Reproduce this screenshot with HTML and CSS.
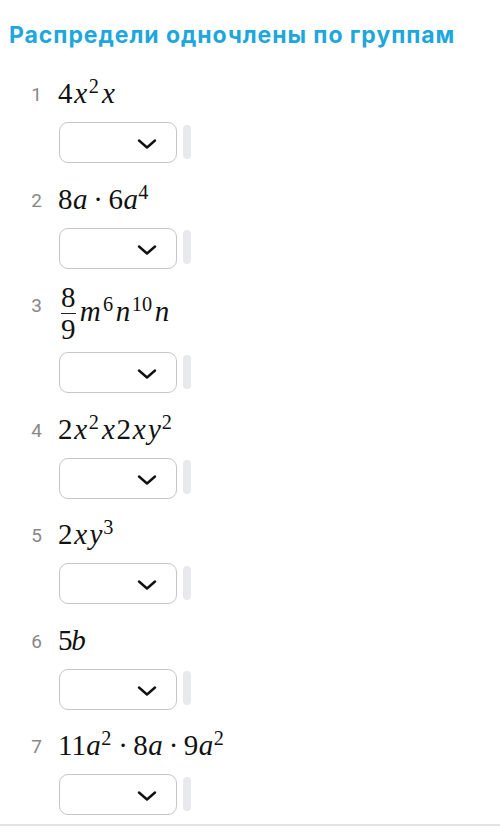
FILE: index.html
```html
<!DOCTYPE html>
<html lang="ru">
<head>
<meta charset="utf-8">
<title>Распредели одночлены по группам</title>
<link rel="stylesheet" href="styles.css">
</head>
<body>
<h1 class="title">Распредели одночлены по группам</h1>
<ol class="list">
  <li class="item">
    <div class="row"><span class="num">1</span><span class="math"><span class="d">4</span><i class="vx">x</i><sup>2</sup><i class="vx">x</i></span></div>
    <div class="pick"><div class="select"><svg class="chev" viewBox="0 0 20 10"><polyline points="2,1.5 10,8.5 18,1.5"/></svg></div><span class="bar"></span></div>
  </li>
  <li class="item">
    <div class="row"><span class="num">2</span><span class="math"><span class="d">8</span><i class="va">a</i><span class="op">·</span><span class="d">6</span><i class="va">a</i><sup>4</sup></span></div>
    <div class="pick"><div class="select"><svg class="chev" viewBox="0 0 20 10"><polyline points="2,1.5 10,8.5 18,1.5"/></svg></div><span class="bar"></span></div>
  </li>
  <li class="item">
    <div class="row"><span class="num">3</span><span class="math"><span class="frac"><span class="fn">8</span><span class="fl"></span><span class="fd">9</span></span><i class="vm">m</i><sup>6</sup><i class="vn">n</i><sup>10</sup><i class="vn">n</i></span></div>
    <div class="pick"><div class="select"><svg class="chev" viewBox="0 0 20 10"><polyline points="2,1.5 10,8.5 18,1.5"/></svg></div><span class="bar"></span></div>
  </li>
  <li class="item">
    <div class="row"><span class="num">4</span><span class="math"><span class="d">2</span><i class="vx">x</i><sup>2</sup><i class="vx">x</i><span class="d">2</span><i class="vx">x</i><i class="vy">y</i><sup>2</sup></span></div>
    <div class="pick"><div class="select"><svg class="chev" viewBox="0 0 20 10"><polyline points="2,1.5 10,8.5 18,1.5"/></svg></div><span class="bar"></span></div>
  </li>
  <li class="item">
    <div class="row"><span class="num">5</span><span class="math"><span class="d">2</span><i class="vx">x</i><i class="vy">y</i><sup>3</sup></span></div>
    <div class="pick"><div class="select"><svg class="chev" viewBox="0 0 20 10"><polyline points="2,1.5 10,8.5 18,1.5"/></svg></div><span class="bar"></span></div>
  </li>
  <li class="item">
    <div class="row"><span class="num">6</span><span class="math"><span class="d">5</span><i class="vb">b</i></span></div>
    <div class="pick"><div class="select"><svg class="chev" viewBox="0 0 20 10"><polyline points="2,1.5 10,8.5 18,1.5"/></svg></div><span class="bar"></span></div>
  </li>
  <li class="item">
    <div class="row"><span class="num">7</span><span class="math"><span class="d">11</span><i class="va">a</i><sup>2</sup><span class="op">·</span><span class="d">8</span><i class="va">a</i><span class="op">·</span><span class="d">9</span><i class="va">a</i><sup>2</sup></span></div>
    <div class="pick"><div class="select"><svg class="chev" viewBox="0 0 20 10"><polyline points="2,1.5 10,8.5 18,1.5"/></svg></div><span class="bar"></span></div>
  </li>
</ol>
</body>
</html>
```
FILE: styles.css
```css
html, body {
  margin: 0;
  padding: 0;
  background: #ffffff;
}
body {
  font-family: Inter, Roboto, "Noto Sans", sans-serif;
  color: #111;
}
.title {
  margin: 0;
  padding: 21px 0 0 9px;
  font-size: 23px;
  line-height: 28px;
  font-weight: 700;
  color: #1ea7dc;
  letter-spacing: 0.95px;
  white-space: nowrap;
}
.list {
  list-style: none;
  margin: 28px 0 0 0;
  padding: 0 0 9px 0;
  border-bottom: 2px solid #e3e3e3;
}
.item {
  margin-bottom: 19.5px;
}
.item:last-child {
  margin-bottom: 0;
}
.row {
  display: flex;
  align-items: flex-start;
  gap: 16px;
}
.num {
  width: 42px;
  height: 32px;
  box-sizing: border-box;
  flex: none;
  text-align: right;
  font-family: Roboto, "Noto Sans", sans-serif;
  font-size: 19px;
  line-height: 29px;
  padding-top: 3px;
  color: #888888;
}
.math {
  display: block;
  font-family: "Liberation Serif", "Times New Roman", serif;
  font-size: 29px;
  line-height: 32px;
  color: #111;
  white-space: nowrap;
}
.math i {
  font-style: italic;
}
.math sup {
  font-size: 0.7em;
  line-height: 0;
  vertical-align: 10px;
  padding-right: 0.06em;
}
.vx { padding: 0 0.06em; }
.va { padding: 0 0.015em; }
.vy { padding: 0 0.025em; }
.vm { padding: 0 0.08em; }
.vn { padding: 0 0.05em; }
.vb { margin-left: -0.04em; }
.op {
  padding: 0 0.19em;
}
.frac {
  display: inline-flex;
  flex-direction: column;
  align-items: center;
  vertical-align: 14px;
  padding: 0 2px 0 3px;
}
.fn, .fd {
  line-height: 19px;
  display: block;
}
.fl {
  display: block;
  width: 100%;
  height: 1px;
  margin: 6px 0;
  background: #222;
}
.pick {
  display: flex;
  align-items: center;
  gap: 6px;
  margin: 13px 0 0 59px;
}
.select {
  box-sizing: border-box;
  width: 118px;
  height: 41px;
  border: 1.5px solid #c6c6c6;
  border-radius: 9px;
  display: flex;
  align-items: center;
  justify-content: flex-end;
  padding: 3px 19px 0 0;
}
.chev {
  width: 20px;
  height: 10px;
  fill: none;
  stroke: #111;
  stroke-width: 2.4;
  stroke-linecap: round;
  stroke-linejoin: round;
}
.bar {
  width: 8px;
  height: 34px;
  border-radius: 4px;
  background: #e7e9ec;
  margin-top: -2px;
}
```
